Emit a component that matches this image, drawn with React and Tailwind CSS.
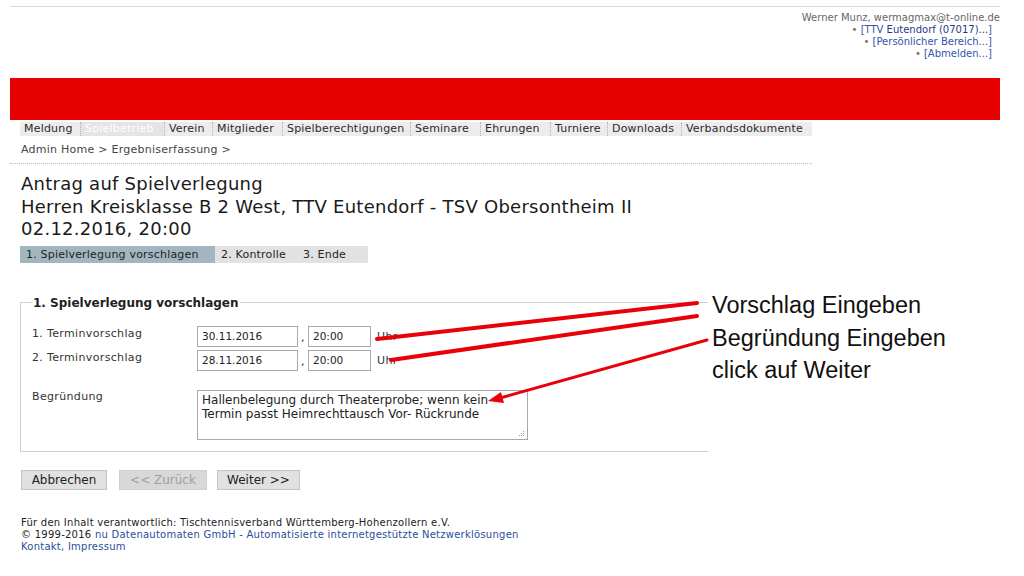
export default function App() {
  const menu = [
    { t: "Meldung", w: 60 },
    { t: "Spielbetrieb", w: 84, faded: true },
    { t: "Verein", w: 48 },
    { t: "Mitglieder", w: 70 },
    { t: "Spielberechtigungen", w: 128 },
    { t: "Seminare", w: 70 },
    { t: "Ehrungen", w: 70 },
    { t: "Turniere", w: 57 },
    { t: "Downloads", w: 74 },
    { t: "Verbandsdokumente", w: 131 },
  ];
  return (
    <div
      className="relative w-[1024px] h-[576px] overflow-hidden bg-white text-[#222]"
      style={{ fontFamily: '"DejaVu Sans", Verdana, sans-serif' }}
    >
      {/* header */}
      <div className="pt-[6px] px-[10px]">
        <div className="w-[990px] border-t border-[#d8d8d8]" />
        <div className="flex flex-col items-end pr-[14px] pt-[5px] text-[10px] leading-[12px]">
          <div className="text-[#666]">Werner Munz, wermagmax@t-online.de</div>
          <div className="pr-[8px] text-[#3355aa]">
            <span className="text-[#777]">•</span> [TTV <span className="text-[#1f3b86]">Eutendorf (07017)...</span>]
          </div>
          <div className="pr-[8px] text-[#3355aa]">
            <span className="text-[#777]">•</span> [Persönlicher Bereich...]
          </div>
          <div className="pr-[8px] text-[#3355aa]">
            <span className="text-[#777]">•</span> [Abmelden...]
          </div>
        </div>
        <div className="mt-[18px] h-[42px] w-[990px] bg-[#e60000]" />
      </div>

      {/* menu */}
      <div className="ml-[20px] mt-[2px] flex w-[792px] h-[14px] bg-[#ececec] text-[11px] leading-[14px] tracking-[0.2px]">
        {menu.map((m, i) => (
          <div
            key={m.t}
            style={{ width: m.w }}
            className={
              (i > 0 ? "border-l border-dotted border-[#b0b0b0] " : "") +
              (m.faded ? "text-white bg-[#e4e4e4] " : "text-[#2a2a2a] ") +
              "pl-[4px] shrink-0 whitespace-nowrap"
            }
          >
            {m.t}
          </div>
        ))}
      </div>

      {/* breadcrumb */}
      <div className="ml-[21px] mt-[7px] text-[11px] leading-[14px] tracking-[0.25px] text-[#444]">
        Admin Home &gt; Ergebniserfassung &gt;
      </div>
      <div className="ml-[10px] mt-[6px] w-[802px] border-t border-dotted border-[#bbb]" />

      {/* headings */}
      <div className="ml-[21px] mt-[9px] text-[18px] leading-[22.5px] tracking-[0.25px] text-[#1a1a1a]">
        <div>Antrag auf Spielverlegung</div>
        <div>Herren Kreisklasse B 2 West, TTV Eutendorf - TSV Obersontheim II</div>
        <div>02.12.2016, 20:00</div>
      </div>

      {/* steps */}
      <div className="ml-[20px] mt-[5px] flex w-[348px] h-[17px] text-[11px] leading-[17px] tracking-[0.2px] bg-[#e2e2e2] text-[#222]">
        <div className="w-[195px] bg-[#a2b6c0] pl-[6px] whitespace-nowrap">1. Spielverlegung vorschlagen</div>
        <div className="pl-[6px] w-[88px] whitespace-nowrap">2. Kontrolle</div>
        <div className="whitespace-nowrap">3. Ende</div>
      </div>

      {/* fieldset */}
      <fieldset className="ml-[20px] mt-[33px] w-[688px] border-t border-l border-b border-[#cfcfcf] pl-[11px] pb-[11px] text-[11px] tracking-[0.35px]">
        <legend className="px-[1px] font-bold text-[12px] leading-[14px] tracking-normal text-[#222]">
          1. Spielverlegung vorschlagen
        </legend>
        <div className="mt-[16px] flex flex-col gap-[3px]">
          {[
            ["1. Terminvorschlag", "30.11.2016"],
            ["2. Terminvorschlag", "28.11.2016"],
          ].map(([l, d]) => (
            <div key={l} className="flex items-start h-[21px]">
              <div className="w-[165px] leading-[14px] pt-[1px] text-[#333]">{l}</div>
              <div className="w-[101px] h-[21px] border border-[#a9a9a9] pl-[4px] text-[10.5px] tracking-normal leading-[19px] text-[#222]">{d}</div>
              <div className="w-[10px] pl-[3px] leading-[24px]">,</div>
              <div className="w-[63px] h-[21px] border border-[#a9a9a9] pl-[4px] text-[10.5px] tracking-normal leading-[19px] text-[#222]">20:00</div>
              <div className="pl-[6px] leading-[21px] text-[#333]">Uhr</div>
            </div>
          ))}
        </div>
        <div className="mt-[19px] flex items-start">
          <div className="w-[165px] pt-[0px] leading-[14px] text-[#333]">Begründung</div>
          <div className="relative w-[331px] h-[50px] border border-[#a9a9a9] px-[4px] pt-[2px] text-[12px] tracking-normal leading-[14px] text-[#222]">
            <div>Hallenbelegung durch Theaterprobe; wenn kein</div>
            <div>Termin passt Heimrechttausch Vor- Rückrunde</div>
            <svg className="absolute right-[2px] bottom-[2px]" width="7" height="7" viewBox="0 0 7 7">
              <rect x="5" y="1" width="1" height="1" fill="#999" />
              <rect x="3" y="3" width="1" height="1" fill="#999" />
              <rect x="5" y="3" width="1" height="1" fill="#999" />
              <rect x="1" y="5" width="1" height="1" fill="#999" />
              <rect x="3" y="5" width="1" height="1" fill="#999" />
              <rect x="5" y="5" width="1" height="1" fill="#999" />
            </svg>
          </div>
        </div>
      </fieldset>

      {/* buttons */}
      <div className="ml-[21px] mt-[18px] flex text-[12px]">
        <div className="w-[86px] h-[20px] flex items-center justify-center bg-[#e1e1e1] border border-[#c4c4c4] text-[#222]">Abbrechen</div>
        <div className="ml-[12px] w-[88px] h-[20px] flex items-center justify-center bg-[#d8d8d8] border border-[#d0d0d0] text-[#a0a0a0]">&lt;&lt; Zurück</div>
        <div className="ml-[10px] w-[83px] h-[20px] flex items-center justify-center bg-[#e1e1e1] border border-[#c4c4c4] text-[#222]">Weiter &gt;&gt;</div>
      </div>

      {/* footer */}
      <div className="ml-[21px] mt-[27px] text-[10px] leading-[12px] tracking-[0.25px] text-[#222]">
        <div>Für den Inhalt verantwortlich: Tischtennisverband Württemberg-Hohenzollern e.V.</div>
        <div>
          © 1999-2016 <span className="text-[#2a4d9b]">nu Datenautomaten GmbH - Automatisierte internetgestützte Netzwerklösungen</span>
        </div>
        <div className="text-[#2a4d9b]">Kontakt, Impressum</div>
      </div>

      {/* annotations */}
      <svg className="absolute left-0 top-0 pointer-events-none" width="1024" height="576">
        <line x1="697" y1="303" x2="377" y2="339" stroke="#e8000b" strokeWidth="4" strokeLinecap="round" />
        <line x1="697" y1="316" x2="391" y2="360" stroke="#e8000b" strokeWidth="4" strokeLinecap="round" />
        <line x1="707" y1="340" x2="500" y2="398" stroke="#e8000b" strokeWidth="3" strokeLinecap="round" />
        <polygon points="488,401 501,392 504,403" fill="#e8000b" />
      </svg>
      <div
        className="absolute left-[712px] top-[289px] text-[23.5px] leading-[32.5px] text-[#111]"
        style={{ fontFamily: '"Liberation Sans", Arial, sans-serif' }}
      >
        <div>Vorschlag Eingeben</div>
        <div>Begründung Eingeben</div>
        <div>click auf Weiter</div>
      </div>
    </div>
  );
}
